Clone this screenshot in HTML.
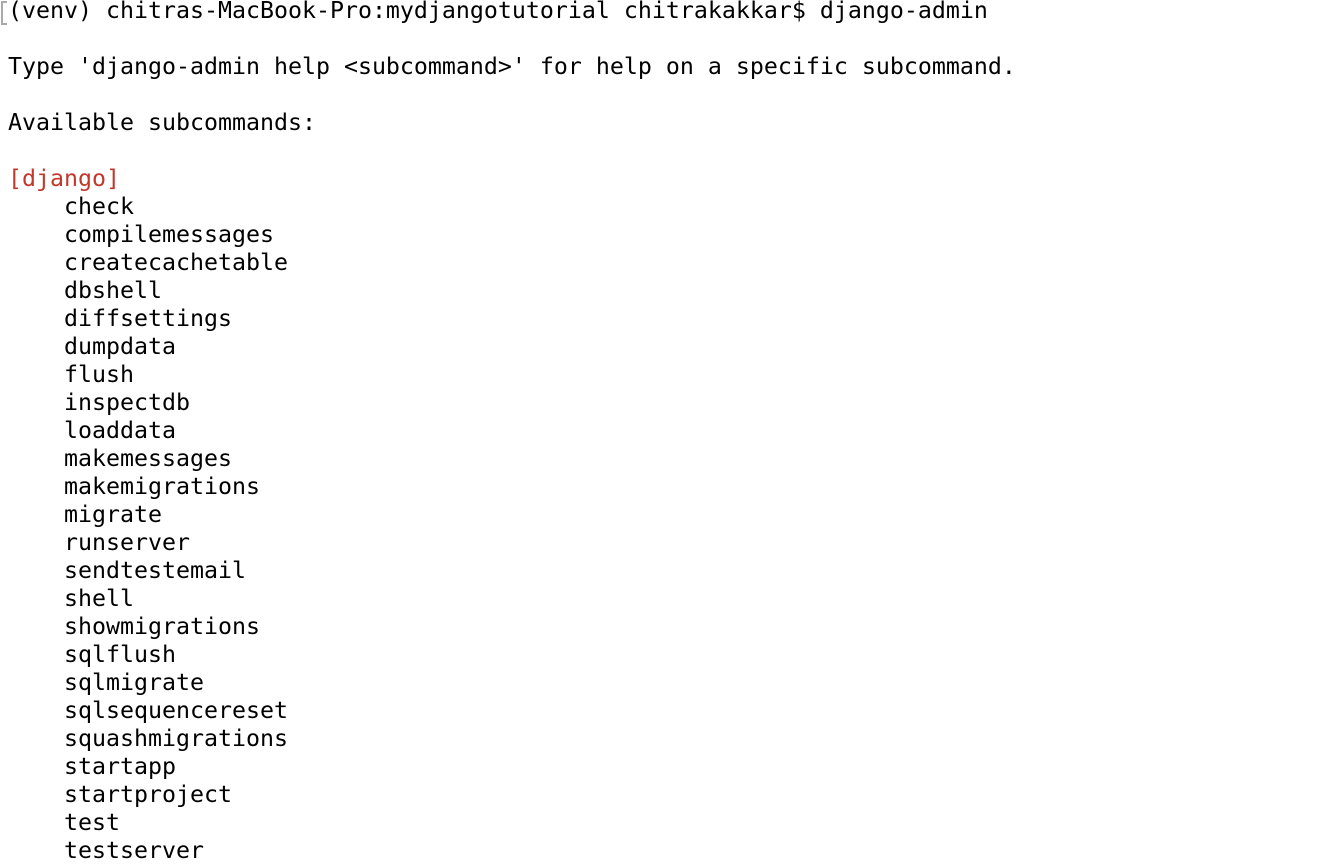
<!DOCTYPE html>
<html><head><meta charset="utf-8"><style>
html,body{margin:0;padding:0;background:#fff;width:1332px;height:866px;overflow:hidden;}
pre{position:absolute;left:8px;top:-3px;margin:0;font-family:"DejaVu Sans Mono","Liberation Mono",monospace;font-size:23.25px;line-height:28px;color:#000;}
.r{color:#c0392b;}
.b{position:absolute;left:1px;top:1px;width:4px;height:20px;border:2px solid #aaa;border-right:none;}
</style></head><body>
<div class="b"></div>
<pre>(venv) chitras-MacBook-Pro:mydjangotutorial chitrakakkar$ django-admin

Type 'django-admin help &lt;subcommand&gt;' for help on a specific subcommand.

Available subcommands:

<span class="r">[django]</span>
    check
    compilemessages
    createcachetable
    dbshell
    diffsettings
    dumpdata
    flush
    inspectdb
    loaddata
    makemessages
    makemigrations
    migrate
    runserver
    sendtestemail
    shell
    showmigrations
    sqlflush
    sqlmigrate
    sqlsequencereset
    squashmigrations
    startapp
    startproject
    test
    testserver</pre>
</body></html>
